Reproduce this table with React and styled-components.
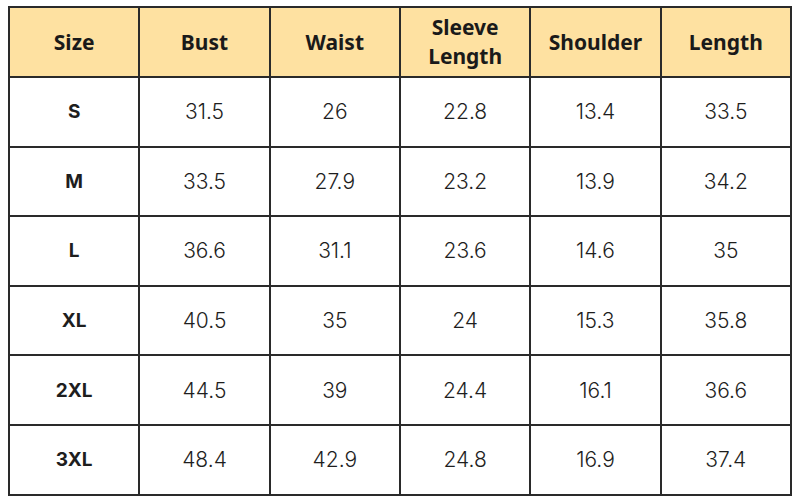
import styled, { createGlobalStyle } from "styled-components";

const GlobalStyle = createGlobalStyle`
  html, body {
    margin: 0;
    padding: 0;
    background: #ffffff;
  }
`;

const Page = styled.div`
  width: 800px;
  height: 500px;
  padding: 6px 8px 0 8px;
  box-sizing: border-box;
  font-family: "Noto Sans", Inter, sans-serif;
`;

const Table = styled.table`
  width: 784px;
  border-collapse: collapse;
  table-layout: fixed;
  border: 2px solid #2a2a2a;
`;

const HeadCell = styled.th`
  height: 68px;
  background: #fee1a1;
  border: 2px solid #2a2a2a;
  font-size: 21px;
  font-weight: 700;
  line-height: 29px;
  color: #1a1a1a;
  text-align: center;
  vertical-align: middle;
  padding: 0 2px;
`;

const Cell = styled.td`
  height: 67.6px;
  border: 2px solid #2a2a2a;
  text-align: center;
  vertical-align: middle;
  font-family: Inter, "Noto Sans", sans-serif;
  font-size: ${(p) => (p.$bold ? "19px" : "21px")};
  font-weight: ${(p) => (p.$bold ? 700 : 300)};
  color: #1e1e1e;
  padding: 0;
`;

const headers = ["Size", "Bust", "Waist", ["Sleeve", "Length"], "Shoulder", "Length"];

const rows = [
  ["S", "31.5", "26", "22.8", "13.4", "33.5"],
  ["M", "33.5", "27.9", "23.2", "13.9", "34.2"],
  ["L", "36.6", "31.1", "23.6", "14.6", "35"],
  ["XL", "40.5", "35", "24", "15.3", "35.8"],
  ["2XL", "44.5", "39", "24.4", "16.1", "36.6"],
  ["3XL", "48.4", "42.9", "24.8", "16.9", "37.4"],
];

export default function App() {
  return (
    <Page>
      <GlobalStyle />
      <Table>
        <thead>
          <tr>
            {headers.map((h, i) => (
              <HeadCell key={i}>
                {Array.isArray(h) ? (
                  <>
                    {h[0]}
                    <br />
                    {h[1]}
                  </>
                ) : (
                  h
                )}
              </HeadCell>
            ))}
          </tr>
        </thead>
        <tbody>
          {rows.map((r) => (
            <tr key={r[0]}>
              {r.map((v, i) => (
                <Cell key={i} $bold={i === 0}>
                  {v}
                </Cell>
              ))}
            </tr>
          ))}
        </tbody>
      </Table>
    </Page>
  );
}
